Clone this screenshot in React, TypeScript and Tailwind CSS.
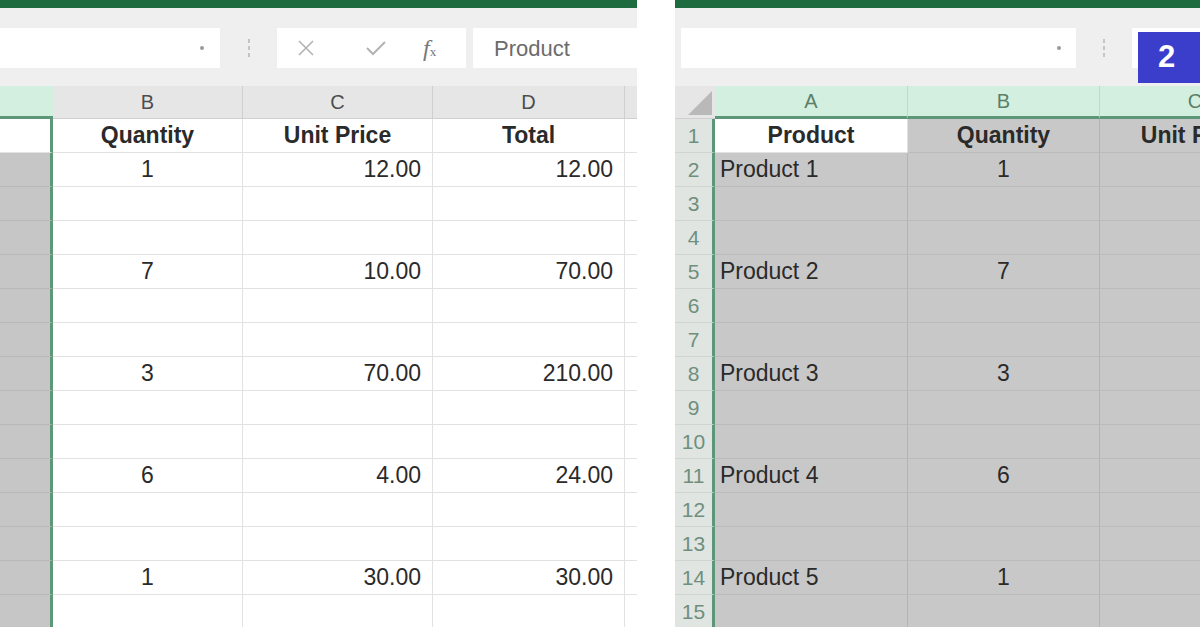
import React from 'react';

type Row = [string, string, string];

const LEFT_DATA: Record<number, Row> = {
  2: ['1', '12.00', '12.00'],
  5: ['7', '10.00', '70.00'],
  8: ['3', '70.00', '210.00'],
  11: ['6', '4.00', '24.00'],
  14: ['1', '30.00', '30.00'],
};

const RIGHT_DATA: Record<number, Row> = {
  2: ['Product 1', '1', '12.00'],
  5: ['Product 2', '7', '10.00'],
  8: ['Product 3', '3', '70.00'],
  11: ['Product 4', '6', '4.00'],
  14: ['Product 5', '1', '30.00'],
};

const ROWS = Array.from({ length: 15 }, (_, i) => i + 1);

function Dropdown() {
  return <span className="w-[4px] h-[4px] rounded-full bg-[#9a9a9a]" />;
}

function Splitter() {
  return (
    <div className="flex flex-col gap-[3px] items-center">
      <span className="w-[2px] h-[4px] bg-[#c4c4c4]" />
      <span className="w-[2px] h-[4px] bg-[#c4c4c4]" />
      <span className="w-[2px] h-[4px] bg-[#c4c4c4]" />
    </div>
  );
}

function LeftPanel() {
  return (
    <div className="w-[637px] h-full flex flex-col overflow-hidden shrink-0">
      <div className="h-[8px] bg-[#1d6b3f] shrink-0" />
      {/* Formula bar */}
      <div className="h-[78px] bg-[#efefef] shrink-0 flex items-start pt-[20px]">
        <div className="w-[220px] shrink-0 h-[40px] bg-white flex items-center justify-end pr-[16px]">
          <Dropdown />
        </div>
        <div className="w-[57px] shrink-0 h-[40px] flex items-center justify-center">
          <Splitter />
        </div>
        <div className="w-[189px] shrink-0 h-[40px] bg-white flex items-center text-[#b3b3b3]">
          <svg className="ml-[20px]" width="18" height="18" viewBox="0 0 18 18" fill="none" stroke="currentColor" strokeWidth="1.6">
            <path d="M2 2 L16 16 M16 2 L2 16" />
          </svg>
          <svg className="ml-[50px]" width="22" height="18" viewBox="0 0 22 18" fill="none" stroke="currentColor" strokeWidth="2">
            <path d="M2 9 L8 15 L20 3" />
          </svg>
          <span className="ml-[36px] text-[#777] font-['Liberation_Serif',serif] italic text-[24px] leading-none">
            f<span className="text-[13px] not-italic">x</span>
          </span>
        </div>
        <div className="flex-1 ml-[7px] h-[40px] bg-white flex items-center pl-[21px] text-[22px] text-[#6b6b6b]">
          Product
        </div>
      </div>
      {/* Column headers */}
      <div className="h-[33px] shrink-0 flex text-[20px] text-[#4d4d4d] leading-none">
        <div className="w-[53px] shrink-0 bg-[#d3efdf] border-b-[3px] border-[#5e9679]" />
        <div className="w-[190px] shrink-0 bg-[#e6e6e6] border-r border-b border-[#cfcfcf] flex items-center justify-center">B</div>
        <div className="w-[190px] shrink-0 bg-[#e6e6e6] border-r border-b border-[#cfcfcf] flex items-center justify-center">C</div>
        <div className="w-[192px] shrink-0 bg-[#e6e6e6] border-r border-b border-[#cfcfcf] flex items-center justify-center">D</div>
        <div className="flex-1 bg-[#e6e6e6] border-b border-[#cfcfcf]" />
      </div>
      {/* Cells */}
      {ROWS.map((r) => {
        const d = LEFT_DATA[r];
        const head = r === 1;
        return (
          <div key={r} className={`h-[34px] shrink-0 flex text-[23px] text-[#2a2a2a] ${head ? 'font-bold' : ''}`}>
            <div
              className={`w-[53px] shrink-0 border-r-[3px] border-r-[#5e9679] border-b ${
                head ? 'bg-white border-b-[#e2e2e2]' : 'bg-[#c6c6c6] border-b-[#b8b8b8]'
              }`}
            />
            <div className="w-[190px] shrink-0 border-r border-b border-[#e2e2e2] flex items-center justify-center">
              {head ? 'Quantity' : d?.[0]}
            </div>
            <div
              className={`w-[190px] shrink-0 border-r border-b border-[#e2e2e2] flex items-center ${
                head ? 'justify-center' : 'justify-end pr-[11px]'
              }`}
            >
              {head ? 'Unit Price' : d?.[1]}
            </div>
            <div
              className={`w-[192px] shrink-0 border-r border-b border-[#e2e2e2] flex items-center ${
                head ? 'justify-center' : 'justify-end pr-[11px]'
              }`}
            >
              {head ? 'Total' : d?.[2]}
            </div>
            <div className="flex-1 border-b border-[#e2e2e2]" />
          </div>
        );
      })}
    </div>
  );
}

function RightPanel() {
  return (
    <div className="relative flex-1 h-full flex flex-col overflow-hidden">
      <div className="h-[8px] bg-[#1d6b3f] shrink-0" />
      <div className="h-[78px] bg-[#efefef] shrink-0 flex items-start pt-[20px]">
        <div className="ml-[6px] w-[395px] shrink-0 h-[40px] bg-white flex items-center justify-end pr-[15px]">
          <Dropdown />
        </div>
        <div className="w-[56px] shrink-0 h-[40px] flex items-center justify-center">
          <Splitter />
        </div>
        <div className="flex-1 h-[40px] bg-white" />
      </div>
      {/* Column headers */}
      <div className="h-[33px] shrink-0 flex text-[20px] text-[#5b7f69] leading-none">
        <div className="w-[40px] shrink-0 bg-[#e6e6e6] border-b border-[#cfcfcf] relative">
          <svg className="absolute right-[3px] bottom-[3px]" width="24" height="24" viewBox="0 0 24 24">
            <path d="M24 0 L24 24 L0 24 Z" fill="#b9b9b9" />
          </svg>
        </div>
        <div className="w-[193px] shrink-0 bg-[#d3efdf] border-r border-b-[3px] border-r-[#c2d6ca] border-b-[#5e9679] flex items-center justify-center pb-[1px]">A</div>
        <div className="w-[192px] shrink-0 bg-[#d3efdf] border-r border-b-[3px] border-r-[#c2d6ca] border-b-[#5e9679] flex items-center justify-center pb-[1px]">B</div>
        <div className="w-[190px] shrink-0 bg-[#d3efdf] border-b-[3px] border-b-[#5e9679] flex items-center justify-center pb-[1px]">C</div>
      </div>
      {ROWS.map((r) => {
        const d = RIGHT_DATA[r];
        const head = r === 1;
        return (
          <div key={r} className={`h-[34px] shrink-0 flex text-[23px] text-[#2a2a2a] ${head ? 'font-bold' : ''}`}>
            <div className="w-[40px] shrink-0 bg-[#e0e5e2] border-r-[3px] border-r-[#5e9679] border-b border-b-[#cfd6d2] flex items-center justify-center text-[21px] font-normal text-[#6f8f7c]">
              {r}
            </div>
            <div
              className={`w-[193px] shrink-0 border-r border-b flex items-center ${
                head ? 'bg-white justify-center border-[#e2e2e2]' : 'bg-[#c8c8c8] pl-[5px] border-r-[#b4b4b4] border-b-[#bbbbbb]'
              }`}
            >
              {head ? 'Product' : d?.[0]}
            </div>
            <div className="w-[192px] shrink-0 bg-[#c8c8c8] border-r border-b border-r-[#b4b4b4] border-b-[#bbbbbb] flex items-center justify-center">
              {head ? 'Quantity' : d?.[1]}
            </div>
            <div
              className={`w-[190px] shrink-0 bg-[#c8c8c8] border-r border-b border-r-[#b4b4b4] border-b-[#bbbbbb] flex items-center ${
                head ? 'justify-center' : 'justify-end pr-[11px]'
              }`}
            >
              {head ? 'Unit Price' : d?.[2]}
            </div>
          </div>
        );
      })}
      {/* Step badge */}
      <div className="absolute left-[463px] top-[32px] w-[70px] h-[51px] bg-[#3a3ecb] flex items-center pl-[20px] text-white font-bold text-[31px]">
        2
      </div>
    </div>
  );
}

export default function App() {
  return (
    <div className="w-[1200px] h-[627px] flex overflow-hidden bg-white font-['Liberation_Sans',Arial,sans-serif]">
      <LeftPanel />
      <div className="w-[38px] shrink-0 bg-white" />
      <RightPanel />
    </div>
  );
}
